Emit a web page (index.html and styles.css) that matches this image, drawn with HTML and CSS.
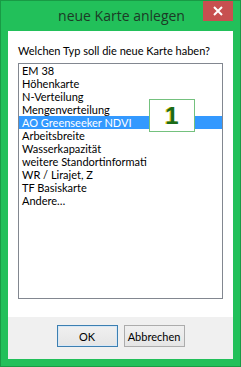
FILE: index.html
```html
<!DOCTYPE html>
<html>
<head>
<meta charset="utf-8">
<link rel="stylesheet" href="styles.css">
</head>
<body>
<div class="window">
  <div class="titlebar">
    <div class="title">neue Karte anlegen</div>
    <div class="close"><svg width="10" height="10" viewBox="0 0 10 10"><path d="M1 1 L9 9 M9 1 L1 9" stroke="#fff" stroke-width="2"/></svg></div>
  </div>
  <div class="client">
    <div class="content">
      <div class="prompt">Welchen Typ soll die neue Karte haben?</div>
      <div class="listbox">
        <div class="item">EM 38</div>
        <div class="item">Höhenkarte</div>
        <div class="item">N-Verteilung</div>
        <div class="item">Mengenverteilung</div>
        <div class="item selected">AO Greenseeker NDVI</div>
        <div class="item">Arbeitsbreite</div>
        <div class="item">Wasserkapazität</div>
        <div class="item">weitere Standortinformati</div>
        <div class="item">WR / Lirajet, Z</div>
        <div class="item">TF Basiskarte</div>
        <div class="item">Andere…</div>
        <div class="badge">1</div>
      </div>
    </div>
    <div class="footer">
      <button class="btn default">OK</button>
      <button class="btn">Abbrechen</button>
    </div>
  </div>
</div>
</body>
</html>
```
FILE: styles.css
```css
html, body {
  margin: 0;
  padding: 0;
}
body {
  width: 241px;
  height: 367px;
  overflow: hidden;
  font-family: "Lato", "Noto Sans", sans-serif;
}
.window {
  box-sizing: border-box;
  width: 241px;
  height: 367px;
  background: #22c05a;
  border: 1px solid #199a45;
  display: flex;
  flex-direction: column;
}
.titlebar {
  height: 30px;
  position: relative;
  display: flex;
  justify-content: center;
}
.title {
  font-family: "Open Sans", sans-serif;
  font-size: 14px;
  color: #1c3a26;
  line-height: 29px;
  padding-left: 2px;
}
.close {
  position: absolute;
  top: 0;
  right: 7px;
  width: 30px;
  height: 20px;
  background: #c75050;
  display: flex;
  align-items: center;
  justify-content: center;
}
.client {
  margin: 0 7px 7px 7px;
  flex: 1;
  background: #fff;
  display: flex;
  flex-direction: column;
}
.content {
  flex: 1;
  padding: 0 10px;
}
.prompt {
  font-family: "Lato", sans-serif;
  font-size: 11px;
  color: #000;
  line-height: 14px;
  margin-top: 13px;
  height: 19px;
  white-space: nowrap;
}
.listbox {
  position: relative;
  box-sizing: border-box;
  height: 236px;
  border: 1px solid #828790;
  padding: 0;
}
.item {
  height: 13px;
  line-height: 13px;
  font-family: "Lato", sans-serif;
  font-size: 11px;
  color: #000;
  padding-left: 3px;
  white-space: nowrap;
}
.item.selected {
  background: #3399ff;
  color: #fff;
}
.badge {
  position: absolute;
  left: 130px;
  top: 35px;
  width: 44px;
  height: 31px;
  background: #fff;
  border: 1.5px solid #74c17e;
  font-family: "Liberation Sans", sans-serif;
  font-weight: bold;
  font-size: 24px;
  color: #1a6b1a;
  text-align: center;
  line-height: 31px;
  text-shadow: -1px 0 0 #d4c200;
}
.footer {
  height: 42px;
  background: #f0f0f0;
  display: flex;
  justify-content: center;
  align-items: flex-start;
  gap: 6px;
  padding-top: 8px;
  box-sizing: border-box;
}
.btn {
  width: 61px;
  height: 22px;
  box-sizing: border-box;
  border: 1px solid #acacac;
  background: linear-gradient(#f0f0f0, #e5e5e5);
  font-family: "Lato", sans-serif;
  font-size: 11px;
  color: #000;
  padding: 0;
  margin: 0;
}
.btn.default {
  border-color: #3c7fb1;
  box-shadow: inset 0 0 0 1px #d7e8f7;
}
```
